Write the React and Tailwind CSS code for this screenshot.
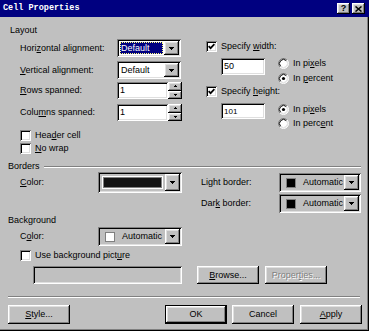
import React from "react";

const SUNKEN =
  "shadow-[inset_1px_1px_0_#808080,inset_-1px_-1px_0_#ffffff,inset_2px_2px_0_#000000,inset_-2px_-2px_0_#dfdfdf]";
const RAISED =
  "shadow-[inset_-1px_-1px_0_#000000,inset_1px_1px_0_#ffffff,inset_-2px_-2px_0_#808080,inset_2px_2px_0_#dfdfdf]";

function U({ children }) {
  return <span className="underline underline-offset-[1px]">{children}</span>;
}

function DownArrow() {
  return (
    <svg width="5" height="3" viewBox="0 0 5 3" shapeRendering="crispEdges">
      <rect x="0" y="0" width="5" height="1" fill="#000" />
      <rect x="1" y="1" width="3" height="1" fill="#000" />
      <rect x="2" y="2" width="1" height="1" fill="#000" />
    </svg>
  );
}

function SmallUp() {
  return (
    <svg width="3" height="2" viewBox="0 0 3 2" shapeRendering="crispEdges">
      <rect x="1" y="0" width="1" height="1" fill="#000" />
      <rect x="0" y="1" width="3" height="1" fill="#000" />
    </svg>
  );
}

function SmallDown() {
  return (
    <svg width="3" height="2" viewBox="0 0 3 2" shapeRendering="crispEdges">
      <rect x="0" y="0" width="3" height="1" fill="#000" />
      <rect x="1" y="1" width="1" height="1" fill="#000" />
    </svg>
  );
}

function DropBtn() {
  return (
    <div className={`w-[15px] shrink-0 flex items-center justify-center bg-[#c0c0c0] ${RAISED}`}>
      <DownArrow />
    </div>
  );
}

function Select({ value, focused }) {
  return (
    <div className={`w-[64px] h-[18px] bg-white flex p-[2px] shrink-0 ${SUNKEN}`}>
      <div className="flex-1 flex items-stretch p-[1px]">
        {focused ? (
          <div className="flex-1 bg-[#000080] text-white flex items-center pl-[1px] outline-1 outline-dotted outline-[#ffff80] -outline-offset-1">
            {value}
          </div>
        ) : (
          <div className="flex-1 flex items-center pl-[1px]">{value}</div>
        )}
      </div>
      <DropBtn />
    </div>
  );
}

function Spin({ value }) {
  return (
    <div className="flex h-[17px] shrink-0">
      <div className={`w-[51px] bg-white flex items-center pl-[3px] ${SUNKEN}`}>{value}</div>
      <div className="w-[14px] flex flex-col">
        <div className={`flex-1 bg-[#c0c0c0] flex items-center justify-center ${RAISED}`}>
          <SmallUp />
        </div>
        <div className={`flex-1 bg-[#c0c0c0] flex items-center justify-center ${RAISED}`}>
          <SmallDown />
        </div>
      </div>
    </div>
  );
}

function Check({ checked }) {
  return (
    <div className={`w-[11px] h-[11px] bg-white shrink-0 flex items-center justify-center ${SUNKEN}`}>
      {checked && (
        <svg width="7" height="7" viewBox="0 0 7 7">
          <path d="M0.6 3.2 L2.6 5.2 L6.4 1.2" stroke="#000" strokeWidth="1.7" fill="none" />
        </svg>
      )}
    </div>
  );
}

function Radio({ checked }) {
  return (
    <svg width="11" height="11" viewBox="0 0 11 11" className="shrink-0">
      <circle cx="5.5" cy="5.5" r="4.5" fill="#ffffff" />
      <path d="M1.96 9.04 A5 5 0 0 1 9.04 1.96" stroke="#808080" strokeWidth="1" fill="none" />
      <path d="M9.04 1.96 A5 5 0 0 1 1.96 9.04" stroke="#ffffff" strokeWidth="1" fill="none" />
      <path d="M2.67 8.33 A4 4 0 0 1 8.33 2.67" stroke="#000000" strokeWidth="1" fill="none" />
      <path d="M8.33 2.67 A4 4 0 0 1 2.67 8.33" stroke="#dfdfdf" strokeWidth="1" fill="none" />
      {checked && <circle cx="5.5" cy="5.5" r="1.6" fill="#000" />}
    </svg>
  );
}

function Picker({ className, children }) {
  return (
    <div className={`flex p-[2px] bg-[#c0c0c0] shrink-0 ${SUNKEN} ${className}`}>
      <div className="flex-1 flex items-center min-w-0 overflow-hidden whitespace-nowrap">{children}</div>
      <DropBtn />
    </div>
  );
}

function Btn({ children, className = "", def, disabled }) {
  const inner = (
    <div
      className={`w-full h-full flex items-center justify-center bg-[#c0c0c0] ${RAISED} ${
        disabled ? "text-[#808080] [text-shadow:1px_1px_0_#ffffff]" : ""
      }`}
    >
      {children}
    </div>
  );
  if (def) {
    return <div className={`border border-black shrink-0 ${className}`}>{inner}</div>;
  }
  return <div className={`shrink-0 ${className}`}>{inner}</div>;
}

function Sep({ className = "" }) {
  return <div className={`h-[2px] border-t border-b border-t-[#808080] border-b-white ${className}`} />;
}

export default function App() {
  return (
    <div className="w-[369px] h-[331px] bg-[#c0c0c0] font-['Liberation_Sans',Arial,sans-serif] text-[9px] leading-[11px] text-black overflow-hidden flex flex-col">
      {/* title bar */}
      <div className="h-[17px] bg-[#000080] flex items-center pl-[3px] pr-[4px] shrink-0">
        <span className="font-['Liberation_Mono',monospace] font-bold text-[8.5px] text-white leading-none">
          Cell Properties
        </span>
        <div className="ml-auto flex gap-[2px]">
          <div className={`w-[13px] h-[11px] bg-[#c0c0c0] flex items-center justify-center font-bold text-[9px] leading-none ${RAISED}`}>
            ?
          </div>
          <div className={`w-[13px] h-[11px] bg-[#c0c0c0] flex items-center justify-center ${RAISED}`}>
            <svg width="7" height="6" viewBox="0 0 7 6">
              <path d="M0.5 0.5 L6.5 5.5 M6.5 0.5 L0.5 5.5" stroke="#000" strokeWidth="1.5" />
            </svg>
          </div>
        </div>
      </div>

      <div className="flex-1 border-r border-b border-black">
        <div className="w-full h-full border-r border-b border-[#808080] flex flex-col">
          {/* Layout */}
          <div className="mt-[8px] ml-[10px] h-[11px]">Layout</div>
          <div className="flex">
            <div className="w-[198px] pl-[20px] flex flex-col">
              <div className="mt-[3px] h-[18px] flex items-center">
                <span className="w-[97px]">
                  Hori<U>z</U>ontal alignment:
                </span>
                <Select value="Default" focused />
              </div>
              <div className="mt-[4px] h-[18px] flex items-center">
                <span className="w-[97px]">
                  <U>V</U>ertical alignment:
                </span>
                <Select value="Default" />
              </div>
              <div className="mt-[3px] h-[17px] flex items-center">
                <span className="w-[97px]">
                  <U>R</U>ows spanned:
                </span>
                <Spin value="1" />
              </div>
              <div className="mt-[5px] h-[17px] flex items-center">
                <span className="w-[97px]">
                  Colu<U>m</U>ns spanned:
                </span>
                <Spin value="1" />
              </div>
              <div className="mt-[9px] h-[11px] flex items-center gap-[4px]">
                <Check />
                <span>
                  Hea<U>d</U>er cell
                </span>
              </div>
              <div className="mt-[2px] h-[11px] flex items-center gap-[4px]">
                <Check />
                <span>
                  <U>N</U>o wrap
                </span>
              </div>
            </div>

            <div className="pl-[8px] flex flex-col">
              <div className="mt-[5px] h-[11px] flex items-center gap-[4px]">
                <Check checked />
                <span>
                  Specify <U>w</U>idth:
                </span>
              </div>
              <div className="mt-[4px] flex pl-[15px]">
                <div className={`mt-[2px] w-[44px] h-[17px] bg-white flex items-center pl-[3px] ${SUNKEN}`}>50</div>
                <div className="ml-[13px] flex flex-col">
                  <div className="h-[15px] flex items-center gap-[4px]">
                    <Radio />
                    <span>
                      In pi<U>x</U>els
                    </span>
                  </div>
                  <div className="h-[15px] flex items-center gap-[4px]">
                    <Radio checked />
                    <span>
                      In <U>p</U>ercent
                    </span>
                  </div>
                </div>
              </div>
              <div className="h-[11px] flex items-center gap-[4px]">
                <Check checked />
                <span>
                  Specify <U>h</U>eight:
                </span>
              </div>
              <div className="mt-[5px] flex pl-[15px]">
                <div className={`mt-[1px] w-[44px] h-[16px] bg-white flex items-center pl-[3px] text-[8px] ${SUNKEN}`}>
                  101
                </div>
                <div className="ml-[13px] flex flex-col">
                  <div className="h-[14px] flex items-center gap-[4px]">
                    <Radio checked />
                    <span>
                      In pi<U>x</U>els
                    </span>
                  </div>
                  <div className="h-[14px] flex items-center gap-[4px]">
                    <Radio />
                    <span>
                      In perc<U>e</U>nt
                    </span>
                  </div>
                </div>
              </div>
            </div>
          </div>

          {/* Borders */}
          <div className="mt-[7px] h-[11px] flex items-center">
            <span className="ml-[8px]">Borders</span>
            <Sep className="flex-1 ml-[4px] mr-[6px]" />
          </div>
          <div className="flex">
            <div className="w-[198px] pl-[20px]">
              <div className="h-[21px] flex items-center">
                <span className="w-[78px]">
                  <U>C</U>olor:
                </span>
                <Picker className="w-[84px] h-[21px]">
                  <div className="flex-1 h-full p-[2px]">
                    <div className="h-full border border-white">
                      <div className="h-full border border-[#808080] bg-[#141414]" />
                    </div>
                  </div>
                </Picker>
              </div>
            </div>
            <div className="pl-[3px] flex flex-col">
              <div className="mt-[1px] h-[19px] flex items-center">
                <span className="w-[78px]">
                  Li<U>g</U>ht border:
                </span>
                <Picker className="w-[82px] h-[19px]">
                  <div className="ml-[5px] w-[10px] h-[10px] bg-black border border-[#808080] shrink-0" />
                  <span className="ml-[7px]">Automatic</span>
                </Picker>
              </div>
              <div className="mt-[2px] h-[19px] flex items-center">
                <span className="w-[78px]">
                  Dar<U>k</U> border:
                </span>
                <Picker className="w-[82px] h-[19px]">
                  <div className="ml-[5px] w-[10px] h-[10px] bg-black border border-[#808080] shrink-0" />
                  <span className="ml-[7px]">Automatic</span>
                </Picker>
              </div>
            </div>
          </div>

          {/* Background */}
          <div className="mt-[2px] ml-[8px] h-[11px]">Background</div>
          <div className="mt-[1px] pl-[20px] h-[19px] flex items-center">
            <span className="w-[78px]">
              C<U>o</U>lor:
            </span>
            <Picker className="w-[84px] h-[19px]">
              <div className="ml-[5px] w-[10px] h-[10px] bg-white border border-[#808080] shrink-0" />
              <span className="ml-[7px]">Automatic</span>
            </Picker>
          </div>
          <div className="mt-[4px] pl-[20px] h-[11px] flex items-center gap-[4px]">
            <Check />
            <span>
              Use background pict<U>u</U>re
            </span>
          </div>
          <div className="mt-[5px] h-[18px] flex">
            <div className={`ml-[33px] w-[149px] h-full bg-[#c0c0c0] ${SUNKEN}`} />
            <Btn className="ml-[15px] w-[62px] h-full">
              <span>
                <U>B</U>rowse...
              </span>
            </Btn>
            <Btn className="ml-[6px] w-[62px] h-full" disabled>
              <span>
                Proper<U>t</U>ies...
              </span>
            </Btn>
          </div>

          <Sep className="mt-[12px] ml-[8px] w-[352px]" />

          <div className="mt-[7px] h-[19px] flex">
            <Btn className="ml-[8px] w-[62px] h-full">
              <span>
                <U>S</U>tyle...
              </span>
            </Btn>
            <Btn className="ml-[95px] w-[62px] h-full" def>
              <span>OK</span>
            </Btn>
            <Btn className="ml-[5px] w-[62px] h-full">
              <span>Cancel</span>
            </Btn>
            <Btn className="ml-[6px] w-[62px] h-full">
              <span>
                <U>A</U>pply
              </span>
            </Btn>
          </div>
        </div>
      </div>
    </div>
  );
}
